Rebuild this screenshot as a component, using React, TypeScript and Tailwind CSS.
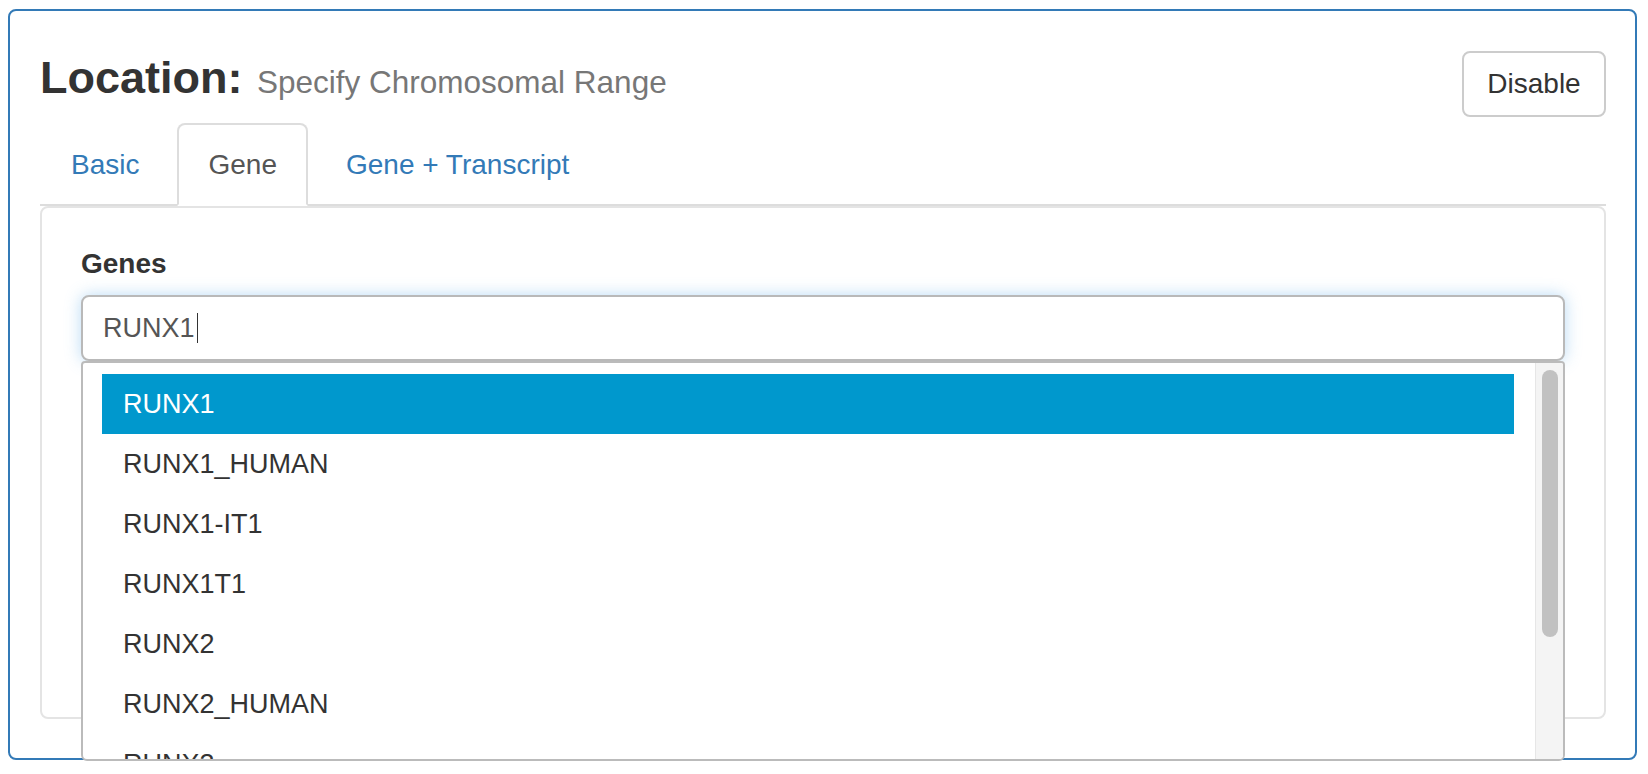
import React from 'react';

const suggestions = ['RUNX1', 'RUNX1_HUMAN', 'RUNX1-IT1', 'RUNX1T1', 'RUNX2', 'RUNX2_HUMAN', 'RUNX3'];

const tabs = [
  { label: 'Basic', active: false },
  { label: 'Gene', active: true },
  { label: 'Gene + Transcript', active: false },
];

const App = () => {
  return (
    <div className="bg-white min-h-[774px] pt-[9px] pl-[8px] pr-[11px] font-['Liberation_Sans',Arial,sans-serif]">
      <div className="border-2 border-[#337ab7] rounded-[8px] pt-[40px] pl-[30px] pr-[29px] pb-[39px]">
        {/* Header */}
        <div className="flex justify-between items-start">
          <h3 className="text-[45px] leading-[54px] font-bold text-[#333]">
            Location: <span className="ml-[2px] text-[31.5px] font-normal text-[#777]">Specify Chromosomal Range</span>
          </h3>
          <button className="h-[66px] w-[144px] border-2 border-[#ccc] rounded-[8px] bg-white text-[28px] text-[#333]">
            Disable
          </button>
        </div>

        {/* Tabs */}
        <ul className="mt-[6px] flex gap-[7px] border-b-2 border-[#ddd]">
          {tabs.map((tab) => (
            <li
              key={tab.label}
              className={
                tab.active
                  ? 'h-[83px] -mb-[2px] px-[29px] flex items-center border-2 border-[#ddd] border-b-transparent rounded-t-[8px] bg-white text-[28px] text-[#555]'
                  : 'h-[83px] -mb-[2px] px-[29px] flex items-center border-2 border-transparent rounded-t-[8px] text-[28px] text-[#337ab7]'
              }
            >
              {tab.label}
            </li>
          ))}
        </ul>

        {/* Tab panel */}
        <div className="h-[513px] border-2 border-[#e4e4e4] rounded-[8px] pt-[36px] px-[39px]">
          <label className="block text-[28px] leading-[40px] font-bold text-[#333] mb-[11px]">Genes</label>
          <div className="relative">
            <div className="h-[66px] border-2 border-[#b9b9b9] rounded-[8px] bg-white px-[20px] flex items-center text-[27px] text-[#555] shadow-[0_0_16px_rgba(102,175,233,0.45)]">
              RUNX1
              <span className="ml-[2px] w-px h-[30px] bg-[#333]" />
            </div>

            {/* Typeahead dropdown */}
            <div className="absolute left-0 right-0 top-full h-[400px] z-10 flex bg-white border-2 border-[#bbb] rounded-t-[4px] rounded-b-[6px] overflow-hidden">
              <ul className="flex-1 pt-[11px] pl-[19px] pr-[21px] overflow-hidden">
                {suggestions.map((item, index) => (
                  <li
                    key={item}
                    className={
                      index === 0
                        ? 'h-[60px] leading-[60px] pl-[21px] text-[27px] bg-[#0098cd] text-white'
                        : 'h-[60px] leading-[60px] pl-[21px] text-[27px] text-[#333]'
                    }
                  >
                    {item}
                  </li>
                ))}
              </ul>
              <div className="w-[28px] bg-[#f4f4f4] border-l border-[#e6e6e6] pt-[7px] pl-[6px]">
                <div className="w-[16px] h-[267px] rounded-full bg-[#c1c1c1]" />
              </div>
            </div>
          </div>
        </div>
      </div>
    </div>
  );
};

export default App;
